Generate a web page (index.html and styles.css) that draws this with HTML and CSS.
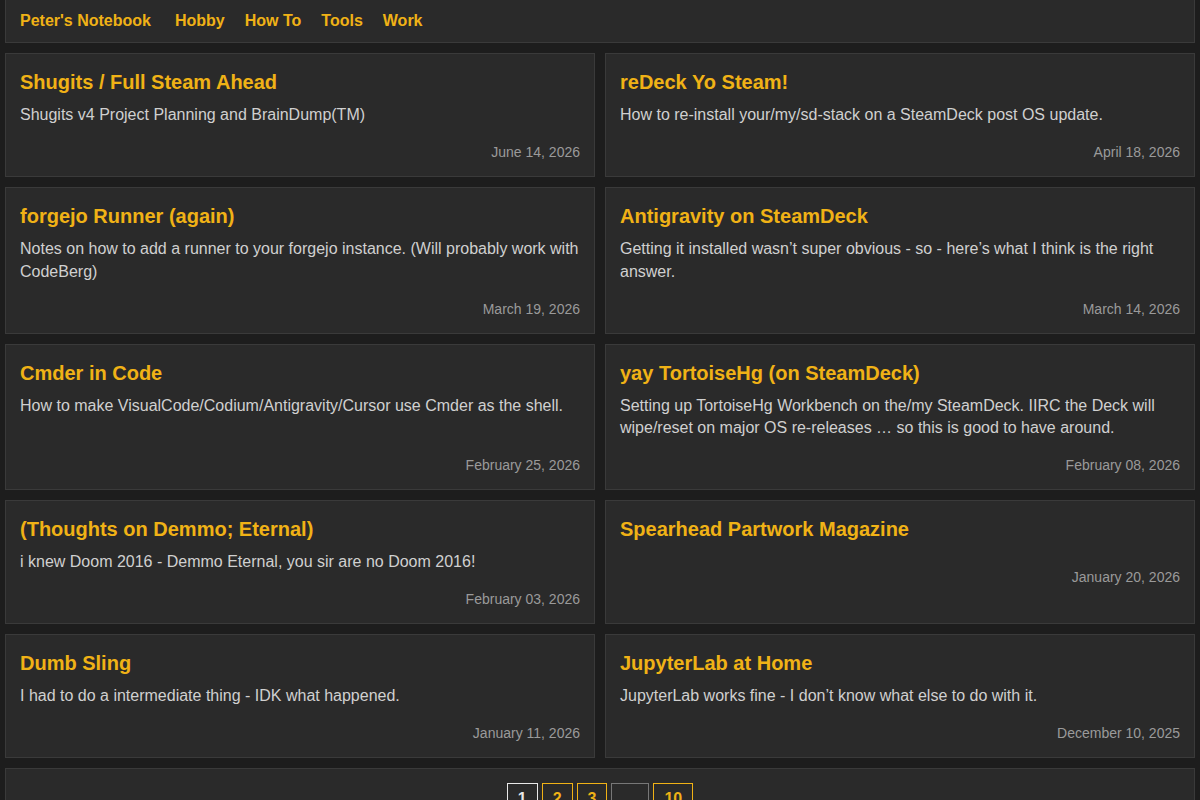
FILE: index.html
```html
<!DOCTYPE html>
<html lang="en">
<head>
<meta charset="utf-8">
<title>Peter's Notebook</title>
<link rel="stylesheet" href="styles.css">
</head>
<body>
<header class="topbar">
  <a class="brand" href="#">Peter's Notebook</a>
  <nav class="nav">
    <a href="#">Hobby</a>
    <a href="#">How To</a>
    <a href="#">Tools</a>
    <a href="#">Work</a>
  </nav>
</header>
<main class="grid">
  <article class="card">
    <h2 class="title">Shugits / Full Steam Ahead</h2>
    <p class="desc">Shugits v4 Project Planning and BrainDump(TM)</p>
    <div class="date">June 14, 2026</div>
  </article>
  <article class="card">
    <h2 class="title">reDeck Yo Steam!</h2>
    <p class="desc">How to re-install your/my/sd-stack on a SteamDeck post OS update.</p>
    <div class="date">April 18, 2026</div>
  </article>
  <article class="card">
    <h2 class="title">forgejo Runner (again)</h2>
    <p class="desc">Notes on how to add a runner to your forgejo instance. (Will probably work with CodeBerg)</p>
    <div class="date">March 19, 2026</div>
  </article>
  <article class="card">
    <h2 class="title">Antigravity on SteamDeck</h2>
    <p class="desc">Getting it installed wasn’t super obvious - so - here’s what I think is the right answer.</p>
    <div class="date">March 14, 2026</div>
  </article>
  <article class="card">
    <h2 class="title">Cmder in Code</h2>
    <p class="desc">How to make VisualCode/Codium/Antigravity/Cursor use Cmder as the shell.</p>
    <div class="date">February 25, 2026</div>
  </article>
  <article class="card">
    <h2 class="title">yay TortoiseHg (on SteamDeck)</h2>
    <p class="desc">Setting up TortoiseHg Workbench on the/my SteamDeck. IIRC the Deck will wipe/reset on major OS re-releases … so this is good to have around.</p>
    <div class="date">February 08, 2026</div>
  </article>
  <article class="card">
    <h2 class="title">(Thoughts on Demmo; Eternal)</h2>
    <p class="desc">i knew Doom 2016 - Demmo Eternal, you sir are no Doom 2016!</p>
    <div class="date">February 03, 2026</div>
  </article>
  <article class="card">
    <h2 class="title">Spearhead Partwork Magazine</h2>
    <div class="date">January 20, 2026</div>
  </article>
  <article class="card">
    <h2 class="title">Dumb Sling</h2>
    <p class="desc">I had to do a intermediate thing - IDK what happened.</p>
    <div class="date">January 11, 2026</div>
  </article>
  <article class="card">
    <h2 class="title">JupyterLab at Home</h2>
    <p class="desc">JupyterLab works fine - I don’t know what else to do with it.</p>
    <div class="date">December 10, 2025</div>
  </article>
</main>
<footer class="pager">
  <span class="page current">1</span>
  <a class="page" href="#">2</a>
  <a class="page" href="#">3</a>
  <span class="page gap">…</span>
  <a class="page" href="#">10</a>
</footer>
</body>
</html>
```
FILE: styles.css
```css
html, body {
  margin: 0;
  padding: 0;
}
body {
  background: #1d1d1d;
  font-family: "Liberation Sans", Arial, sans-serif;
  color: #d0d0d0;
  padding: 0 5px;
}
a {
  text-decoration: none;
}
.topbar {
  display: flex;
  align-items: center;
  height: 43px;
  box-sizing: border-box;
  padding: 0 14px 1px;
  background: #2a2a2a;
  border: 1px solid #3a3a3a;
  border-top: none;
}
.brand {
  color: #f0b216;
  font-weight: bold;
  font-size: 16px;
  margin-right: 24px;
}
.nav {
  display: flex;
  gap: 20px;
}
.nav a {
  color: #f0b216;
  font-weight: bold;
  font-size: 16px;
}
.grid {
  display: grid;
  grid-template-columns: 1fr 1fr;
  gap: 10px;
  margin-top: 10px;
}
.card {
  display: flex;
  flex-direction: column;
  background: #2a2a2a;
  border: 1px solid #3a3a3a;
  padding: 16px 14px 14px;
}
.title {
  margin: 0 0 10px;
  font-size: 20px;
  line-height: 24px;
  font-weight: bold;
  color: #f0b216;
}
.desc {
  margin: 0;
  flex-grow: 1;
  font-size: 16px;
  line-height: 22.5px;
  color: #d0d0d0;
}
.date {
  margin-top: 15.5px;
  text-align: right;
  font-size: 14px;
  line-height: 20px;
  color: #9a9a9a;
}
.pager {
  display: flex;
  justify-content: center;
  gap: 4px;
  margin-top: 10px;
  padding: 14px 0;
  background: #2a2a2a;
  border: 1px solid #3a3a3a;
}
.page {
  display: inline-block;
  padding: 5px 10px;
  border: 1px solid #f0b216;
  color: #f0b216;
  font-weight: bold;
  font-size: 16px;
  line-height: 20px;
  text-align: center;
}
.page.current {
  border-color: #e8e8e8;
  color: #e8e8e8;
}
.page.gap {
  border-color: #777;
  color: #777;
}
```
